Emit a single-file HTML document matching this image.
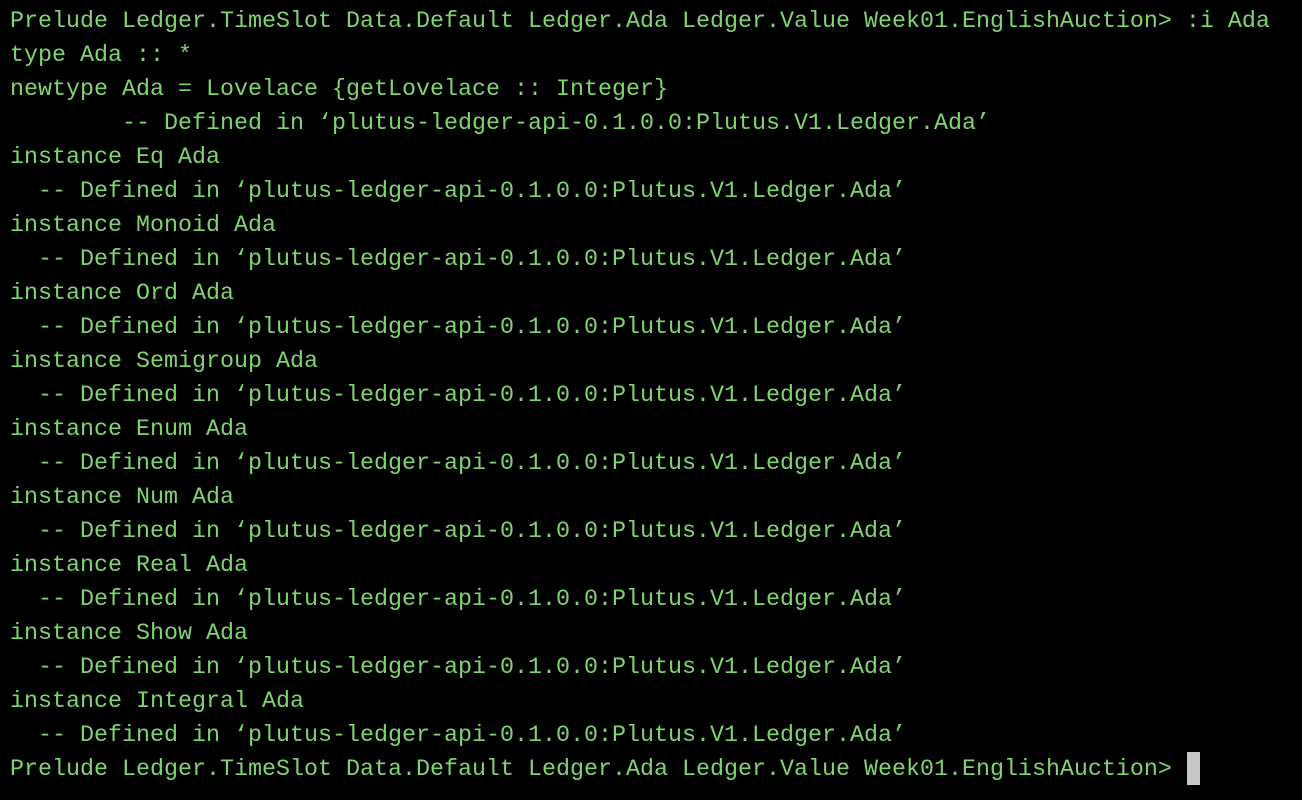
<!DOCTYPE html>
<html><head><style>
html,body{margin:0;background:#000;width:1302px;height:800px;overflow:hidden}
pre{margin:0;position:absolute;left:10px;top:5px;font-family:"Liberation Mono",monospace;font-size:23.33px;line-height:34px;color:#80d46f;white-space:pre}
.cur{display:inline-block;width:13px;height:33px;background:#c8c8c8;vertical-align:top;margin-left:1px;margin-top:-1px}
</style></head><body><pre>Prelude Ledger.TimeSlot Data.Default Ledger.Ada Ledger.Value Week01.EnglishAuction&gt; :i Ada
type Ada :: *
newtype Ada = Lovelace {getLovelace :: Integer}
        -- Defined in ‘plutus-ledger-api-0.1.0.0:Plutus.V1.Ledger.Ada’
instance Eq Ada
  -- Defined in ‘plutus-ledger-api-0.1.0.0:Plutus.V1.Ledger.Ada’
instance Monoid Ada
  -- Defined in ‘plutus-ledger-api-0.1.0.0:Plutus.V1.Ledger.Ada’
instance Ord Ada
  -- Defined in ‘plutus-ledger-api-0.1.0.0:Plutus.V1.Ledger.Ada’
instance Semigroup Ada
  -- Defined in ‘plutus-ledger-api-0.1.0.0:Plutus.V1.Ledger.Ada’
instance Enum Ada
  -- Defined in ‘plutus-ledger-api-0.1.0.0:Plutus.V1.Ledger.Ada’
instance Num Ada
  -- Defined in ‘plutus-ledger-api-0.1.0.0:Plutus.V1.Ledger.Ada’
instance Real Ada
  -- Defined in ‘plutus-ledger-api-0.1.0.0:Plutus.V1.Ledger.Ada’
instance Show Ada
  -- Defined in ‘plutus-ledger-api-0.1.0.0:Plutus.V1.Ledger.Ada’
instance Integral Ada
  -- Defined in ‘plutus-ledger-api-0.1.0.0:Plutus.V1.Ledger.Ada’
Prelude Ledger.TimeSlot Data.Default Ledger.Ada Ledger.Value Week01.EnglishAuction&gt; <span class="cur"></span></pre></body></html>
